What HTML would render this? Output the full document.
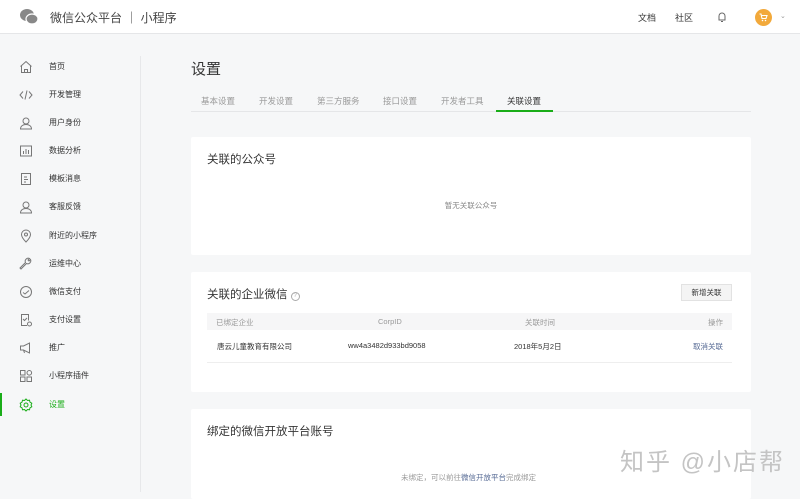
<!DOCTYPE html>
<html><head><meta charset="utf-8"><style>
*{margin:0;padding:0;box-sizing:border-box}
body{width:800px;height:492px;overflow:hidden;background:#f6f7f8;font-family:"Liberation Sans","Noto Sans CJK SC",sans-serif;position:relative;color:#333}
.abs{position:absolute;white-space:nowrap}
.hdr{position:absolute;left:0;top:0;width:800px;height:34px;background:#fff;border-bottom:1px solid #e5e6e8}
.nav{font-size:8px;color:#333;line-height:10px}
.nav svg{position:absolute;left:-30px;top:-2px}
.card{position:absolute;left:191px;width:560px;background:#fff;border-radius:2px}
.t{font-size:11.5px;color:#353535}
.g{font-size:7.5px;color:#888}
</style></head><body>
<div class="hdr">
 <svg class="abs" style="left:19px;top:8px" width="20" height="17" viewBox="0 0 20 17"><ellipse cx="8" cy="7" rx="7" ry="6" fill="#888"/><ellipse cx="13" cy="11" rx="6" ry="5" fill="#888" stroke="#fff" stroke-width="1.2"/></svg>
 <div class="abs" style="left:50px;top:9px;font-size:12px;color:#444">微信公众平台 ｜ 小程序</div>
 <div class="abs" style="left:638px;top:11px;font-size:9px;color:#333">文档</div>
 <div class="abs" style="left:675px;top:11px;font-size:9px;color:#333">社区</div>
 <svg class="abs" style="left:717px;top:11px" width="10" height="12" viewBox="0 0 10 12"><path d="M2 9V5a3 3 0 0 1 6 0v4H1.5M8 9h.5M4 10.5h2" fill="none" stroke="#666" stroke-width="1"/></svg>
 <div class="abs" style="left:755px;top:9px;width:17px;height:17px;border-radius:50%;background:#f2a93b"></div>
 <svg class="abs" style="left:759px;top:13px" width="9" height="9" viewBox="0 0 9 9"><path d="M0.5 1h1.5l1 4.5h4l1-3H2.5" fill="none" stroke="#fff" stroke-width="1.1"/><circle cx="3.5" cy="7.5" r=".8" fill="#fff"/><circle cx="6.5" cy="7.5" r=".8" fill="#fff"/></svg>
 <div class="abs" style="left:780px;top:12px;font-size:7px;color:#999">⌄</div>
</div>
<div class="abs" style="left:140px;top:56px;width:1px;height:436px;background:#e7e8ea"></div>
<div class="abs" style="left:0;top:393px;width:2px;height:23px;background:#1aad19"></div>

<div class="abs nav" style="left:49px;top:62px"><svg width="14" height="14" viewBox="0 0 14 14"><path d="M1.5 6.5L7 1.5l5.5 5M2.5 5.8V12.5h9V5.8M5.5 12.5V9.5h3v3" fill="none" stroke="#777"/></svg>首页</div>
<div class="abs nav" style="left:49px;top:90px"><svg width="14" height="14" viewBox="0 0 14 14"><path d="M4 3.5L1 7l3 3.5M10 3.5l3 3.5-3 3.5M8 2.5L6 11.5" fill="none" stroke="#777"/></svg>开发管理</div>
<div class="abs nav" style="left:49px;top:118px"><svg width="14" height="14" viewBox="0 0 14 14"><circle cx="7" cy="5" r="3" fill="none" stroke="#777"/><path d="M1.5 13c0-3 2.5-4.5 5.5-4.5s5.5 1.5 5.5 4.5z" fill="none" stroke="#777"/></svg>用户身份</div>
<div class="abs nav" style="left:49px;top:146px"><svg width="14" height="14" viewBox="0 0 14 14"><rect x="1.5" y="2" width="11" height="10" fill="none" stroke="#777"/><path d="M4.5 10V7M7 10V5M9.5 10V6" stroke="#777"/></svg>数据分析</div>
<div class="abs nav" style="left:49px;top:174px"><svg width="14" height="14" viewBox="0 0 14 14"><rect x="2.5" y="1.5" width="9" height="11" fill="none" stroke="#777"/><path d="M5 5h3M5 7.5h4M5 10h2" stroke="#777"/></svg>模板消息</div>
<div class="abs nav" style="left:49px;top:202px"><svg width="14" height="14" viewBox="0 0 14 14"><circle cx="7" cy="5" r="3" fill="none" stroke="#777"/><path d="M1.5 13c0-3 2.5-4.5 5.5-4.5s5.5 1.5 5.5 4.5z" fill="none" stroke="#777"/></svg>客服反馈</div>
<div class="abs nav" style="left:49px;top:231px"><svg width="14" height="14" viewBox="0 0 14 14"><path d="M7 13s-4.5-4.5-4.5-7.5a4.5 4.5 0 0 1 9 0C11.5 8.5 7 13 7 13z" fill="none" stroke="#777"/><circle cx="7" cy="5.5" r="1.5" fill="none" stroke="#777"/></svg>附近的小程序</div>
<div class="abs nav" style="left:49px;top:259px"><svg width="14" height="14" viewBox="0 0 14 14"><path d="M2 12l5.5-5.5a3 3 0 0 0 4-4L10 4 9 3l1.5-1.5a3 3 0 0 0-4 4L1 11z" fill="none" stroke="#777"/></svg>运维中心</div>
<div class="abs nav" style="left:49px;top:287px"><svg width="14" height="14" viewBox="0 0 14 14"><circle cx="7" cy="7" r="5.5" fill="none" stroke="#777"/><path d="M4 7.5l2 1.5 4-3.5" fill="none" stroke="#777"/></svg>微信支付</div>
<div class="abs nav" style="left:49px;top:315px"><svg width="14" height="14" viewBox="0 0 14 14"><path d="M8 12.5H2.5v-11h7v6" fill="none" stroke="#777"/><path d="M4 6l1.5 1.5L8 5" fill="none" stroke="#777"/><circle cx="10.5" cy="11" r="2" fill="none" stroke="#777"/></svg>支付设置</div>
<div class="abs nav" style="left:49px;top:343px"><svg width="14" height="14" viewBox="0 0 14 14"><path d="M1.5 5h3l6-3v10l-6-3h-3zM4.5 9l1 3" fill="none" stroke="#777"/></svg>推广</div>
<div class="abs nav" style="left:49px;top:371px"><svg width="14" height="14" viewBox="0 0 14 14"><rect x="1.5" y="1.5" width="4.5" height="4.5" fill="none" stroke="#777"/><rect x="1.5" y="8" width="4.5" height="4.5" fill="none" stroke="#777"/><rect x="8" y="8" width="4.5" height="4.5" fill="none" stroke="#777"/><circle cx="10.3" cy="3.8" r="2.3" fill="none" stroke="#777"/></svg>小程序插件</div>
<div class="abs nav" style="left:49px;top:400px;color:#1aad19"><svg width="14" height="14" viewBox="0 0 14 14"><path d="M7 1l1.5 1.5 2-.3.5 2 1.8 1L12 7l.8 1.8-1.8 1-.5 2-2-.3L7 13l-1.5-1.5-2 .3-.5-2-1.8-1L2 7l-.8-1.8 1.8-1 .5-2 2 .3z" fill="none" stroke="#1aad19"/><circle cx="7" cy="7" r="2" fill="none" stroke="#1aad19"/></svg>设置</div>

<div class="abs" style="left:191px;top:58px;font-size:15px;color:#353535">设置</div>
<div class="abs" style="left:191px;top:111px;width:560px;height:1px;background:#e5e6e8"></div>
<div class="abs" style="left:496px;top:110px;width:57px;height:2px;background:#1aad19"></div>
<div class="abs" style="top:95px;left:201px;font-size:8.5px;color:#999">基本设置</div>
<div class="abs" style="top:95px;left:259px;font-size:8.5px;color:#999">开发设置</div>
<div class="abs" style="top:95px;left:317px;font-size:8.5px;color:#999">第三方服务</div>
<div class="abs" style="top:95px;left:383px;font-size:8.5px;color:#999">接口设置</div>
<div class="abs" style="top:95px;left:441px;font-size:8.5px;color:#999">开发者工具</div>
<div class="abs" style="top:95px;left:507px;font-size:8.5px;color:#333">关联设置</div>

<div class="card" style="top:137px;height:118px">
 <div class="abs t" style="left:16px;top:14px">关联的公众号</div>
 <div class="abs g" style="left:0;width:560px;text-align:center;top:63px">暂无关联公众号</div>
</div>
<div class="card" style="top:272px;height:120px">
 <div class="abs t" style="left:16px;top:14px">关联的企业微信 <span style="display:inline-block;width:9px;height:9px;border:1px solid #aaa;border-radius:50%;font-size:6px;color:#aaa;text-align:center;line-height:7px;vertical-align:1px">?</span></div>
 <div class="abs" style="left:490px;top:12px;width:51px;height:17px;background:#f4f4f4;border:1px solid #e2e2e2;font-size:7.5px;text-align:center;line-height:15px;color:#333">新增关联</div>
 <div class="abs" style="left:16px;top:41px;width:525px;height:17px;background:#f6f6f7"></div>
 <div class="abs g" style="left:25px;top:45px;color:#999">已绑定企业</div>
 <div class="abs g" style="left:187px;top:45px;color:#999">CorpID</div>
 <div class="abs g" style="left:334px;top:45px;color:#999">关联时间</div>
 <div class="abs g" style="left:517px;top:45px;color:#999">操作</div>
 <div class="abs" style="left:26px;top:69px;font-size:7.5px;color:#333">唐云儿童教育有限公司</div>
 <div class="abs" style="left:157px;top:69px;font-size:7.5px;color:#333">ww4a3482d933bd9058</div>
 <div class="abs" style="left:323px;top:69px;font-size:7.5px;color:#333">2018年5月2日</div>
 <div class="abs" style="left:502px;top:69px;font-size:7.5px;color:#576b95">取消关联</div>
 <div class="abs" style="left:16px;top:90px;width:525px;height:1px;background:#eee"></div>
</div>
<div class="card" style="top:409px;height:90px">
 <div class="abs t" style="left:16px;top:14px">绑定的微信开放平台账号</div>
 <div class="abs g" style="left:210px;top:63px;color:#999">未绑定，可以前往<span style="color:#576b95">微信开放平台</span>完成绑定</div>
</div>
<div class="abs" style="left:620px;top:442px;font-size:24px;color:#c4c4c4;letter-spacing:2px">知乎 @小店帮</div>
</body></html>
